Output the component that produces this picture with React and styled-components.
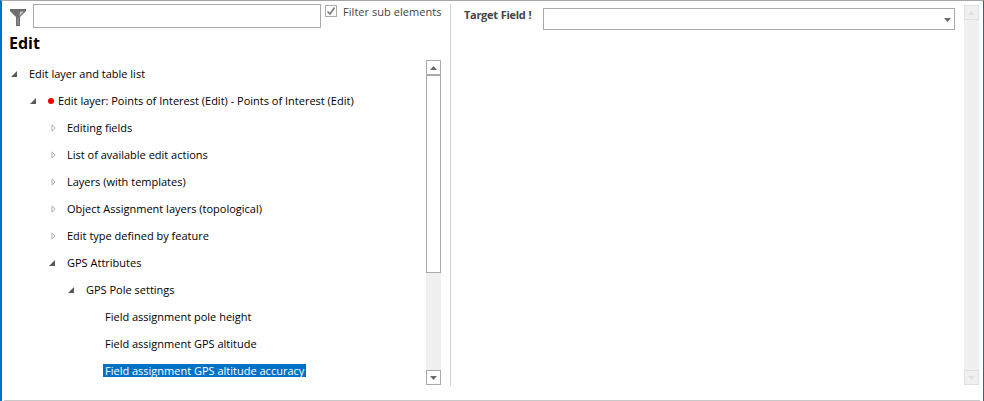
import React from 'react'
import styled, { createGlobalStyle } from 'styled-components'

const GlobalStyle = createGlobalStyle`
  html, body { margin: 0; padding: 0; background: #fff; }
  body { font-family: "Open Sans", "Noto Sans", sans-serif; font-size: 11px; color: #000; }
`

const treeRows = [
  { label: 'Edit layer and table list', indent: 0, state: 'open' },
  { label: 'Edit layer: Points of Interest (Edit) - Points of Interest (Edit)', indent: 1, state: 'open', dot: true },
  { label: 'Editing fields', indent: 2, state: 'closed' },
  { label: 'List of available edit actions', indent: 2, state: 'closed' },
  { label: 'Layers (with templates)', indent: 2, state: 'closed' },
  { label: 'Object Assignment layers (topological)', indent: 2, state: 'closed' },
  { label: 'Edit type defined by feature', indent: 2, state: 'closed' },
  { label: 'GPS Attributes', indent: 2, state: 'open' },
  { label: 'GPS Pole settings', indent: 3, state: 'open' },
  { label: 'Field assignment pole height', indent: 4 },
  { label: 'Field assignment GPS altitude', indent: 4 },
  { label: 'Field assignment GPS altitude accuracy', indent: 4, selected: true },
]

const FilterIcon = () => (
  <svg width="16" height="17" viewBox="0 0 16 17">
    <path d="M0 0H16V2L10 8V17H6V8L0 2Z" fill="#6e6e6e" />
    <path d="M10 2.5H14L9.5 7V6.5Z" fill="#c4c4c4" />
    <path d="M7.5 9H8.5V16H7.5Z" fill="#a0a0a0" />
  </svg>
)

const Expander = ({ state }) => (
  <ExpanderBox>
    {state === 'open' && (
      <svg width="8" height="8" viewBox="0 0 8 8">
        <path d="M7 1V7H1Z" fill="#595959" />
      </svg>
    )}
    {state === 'closed' && (
      <svg width="9" height="10" viewBox="0 0 9 10">
        <path d="M4.5 1.5L8 5L4.5 8.5Z" fill="#fff" stroke="#a6a6a6" />
      </svg>
    )}
  </ExpanderBox>
)

const ScrollBar = ({ disabled, thumb }) => (
  <Bar>
    <BarButton $disabled={disabled}>
      <svg width="7" height="4" viewBox="0 0 7 4"><path d="M3.5 0L7 4H0Z" fill="currentColor" /></svg>
    </BarButton>
    {thumb && <Thumb />}
    <BarTrack />
    <BarButton $disabled={disabled}>
      <svg width="7" height="4" viewBox="0 0 7 4"><path d="M0 0H7L3.5 4Z" fill="currentColor" /></svg>
    </BarButton>
  </Bar>
)

export default function App() {
  return (
    <>
      <GlobalStyle />
      <Window>
        <Panes>
          <LeftPane>
            <FilterRow>
              <FilterIconWrap><FilterIcon /></FilterIconWrap>
              <FilterInput />
              <CheckBox>
                <svg width="10" height="10" viewBox="0 0 10 10">
                  <path d="M1.5 5.5L4 8L8.5 1.5" fill="none" stroke="#7a7a7a" strokeWidth="1.6" />
                </svg>
              </CheckBox>
              <FilterLabel>Filter sub elements</FilterLabel>
            </FilterRow>
            <Heading>Edit</Heading>
            <TreeArea>
              <Tree>
                {treeRows.map((row) => (
                  <TreeRow key={row.label} $indent={row.indent}>
                    <Expander state={row.state} />
                    {row.dot && <Dot />}
                    <RowLabel $selected={row.selected} $dot={row.dot}>{row.label}</RowLabel>
                  </TreeRow>
                ))}
              </Tree>
              <ScrollBar thumb />
            </TreeArea>
          </LeftPane>
          <RightPane>
            <FieldRow>
              <FieldLabel>Target Field !</FieldLabel>
              <Combo>
                <svg width="7" height="4" viewBox="0 0 7 4"><path d="M0 0H7L3.5 4Z" fill="#6a6a6a" /></svg>
              </Combo>
            </FieldRow>
            <ScrollBar disabled />
          </RightPane>
        </Panes>
        <Footer />
      </Window>
    </>
  )
}

const Window = styled.div`
  box-sizing: border-box;
  width: 984px;
  height: 401px;
  display: flex;
  flex-direction: column;
  border-top: 1px solid #a6a6a6;
  border-left: 2px solid #0072c6;
  border-right: 1px solid #0072c6;
  overflow: hidden;
`
const Panes = styled.div`
  display: flex;
  height: 385px;
  margin-right: 4px;
`
const Footer = styled.div`
  height: 1px;
  margin: auto 3px 0 2px;
  background: #c8c8c8;
`
const LeftPane = styled.div`
  box-sizing: border-box;
  width: 449px;
  margin-top: 3px;
  display: flex;
  flex-direction: column;
  border-right: 1px solid #d0d0d0;
`
const FilterRow = styled.div`
  display: flex;
  height: 23px;
`
const FilterIconWrap = styled.div`
  width: 31px;
  padding: 5px 0 0 8px;
  box-sizing: border-box;
`
const FilterInput = styled.div`
  box-sizing: border-box;
  width: 288px;
  height: 24px;
  background: #fff;
  border: 1px solid #a9a9a9;
`
const CheckBox = styled.div`
  box-sizing: border-box;
  width: 12px;
  height: 12px;
  margin: 1px 0 0 4px;
  border: 1px solid #a9a9a9;
  display: flex;
  align-items: center;
  justify-content: center;
`
const FilterLabel = styled.span`
  margin-left: 6px;
  color: #444;
  line-height: 16px;
  white-space: nowrap;
  letter-spacing: 0.05px;
`
const Heading = styled.h1`
  margin: 5px 0 0 7px;
  height: 28px;
  font-size: 16px;
  line-height: 22px;
  font-weight: 700;
  color: #000;
`
const TreeArea = styled.div`
  display: flex;
  height: 325px;
  padding-right: 9px;
`
const Tree = styled.div`
  flex: 1;
  display: flex;
  flex-direction: column;
`
const TreeRow = styled.div`
  height: 27px;
  flex: none;
  display: flex;
  align-items: center;
  padding-left: ${({ $indent }) => 7 + $indent * 19}px;
`
const ExpanderBox = styled.span`
  width: 8px;
  height: 10px;
  margin-left: 1px;
  display: flex;
  align-items: center;
`
const Dot = styled.span`
  width: 6px;
  height: 6px;
  margin-left: 11px;
  border-radius: 50%;
  background: #ee0000;
`
const RowLabel = styled.span`
  margin-left: ${({ $dot }) => ($dot ? '2px' : '9px')};
  padding: 0 2px;
  height: 13px;
  line-height: 13px;
  white-space: nowrap;
  color: ${({ $selected }) => ($selected ? '#fff' : '#000')};
  background: ${({ $selected }) => ($selected ? '#0072c6' : 'transparent')};
`
const Bar = styled.div`
  width: 15px;
  flex: none;
  display: flex;
  flex-direction: column;
  background: #f0f0f0;
`
const BarButton = styled.div`
  box-sizing: border-box;
  width: 15px;
  height: 15px;
  flex: none;
  display: flex;
  align-items: center;
  justify-content: center;
  background: ${({ $disabled }) => ($disabled ? '#f0f0f0' : '#fff')};
  border: 1px solid ${({ $disabled }) => ($disabled ? '#e0e0e0' : '#a9a9a9')};
  color: ${({ $disabled }) => ($disabled ? '#e0e0e0' : '#6a6a6a')};
`
const Thumb = styled.div`
  box-sizing: border-box;
  height: 198px;
  flex: none;
  background: #fff;
  border: 1px solid #a9a9a9;
`
const BarTrack = styled.div`
  flex: 1;
`
const RightPane = styled.div`
  flex: 1;
  display: flex;
  padding: 4px 0 1px;
`
const FieldRow = styled.div`
  flex: 1;
  display: flex;
  align-items: flex-start;
  padding: 3px 9px 0 13px;
`
const FieldLabel = styled.span`
  width: 79px;
  font-weight: 700;
  color: #444;
  line-height: 14px;
  letter-spacing: -0.3px;
  word-spacing: 0.5px;
`
const Combo = styled.div`
  box-sizing: border-box;
  flex: 1;
  height: 22px;
  border: 1px solid #a9a9a9;
  display: flex;
  align-items: center;
  justify-content: flex-end;
  padding: 2px 3px 0 0;
`
